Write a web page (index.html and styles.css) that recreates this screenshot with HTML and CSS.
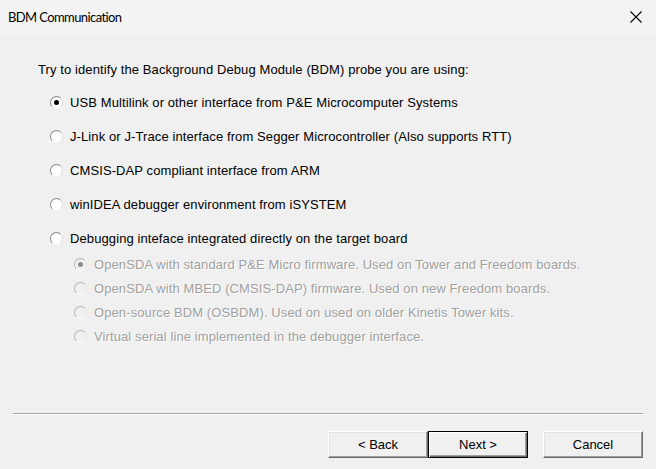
FILE: index.html
```html
<!DOCTYPE html>
<html>
<head>
<meta charset="utf-8">
<link rel="stylesheet" href="styles.css">
</head>
<body>
<div class="dialog">
  <div class="titlebar">
    <span class="title">BDM Communication</span>
    <svg class="close" width="12" height="12" viewBox="0 0 12 12"><path d="M0.5 0.5 L11.5 11.5 M11.5 0.5 L0.5 11.5" stroke="#000" stroke-width="1.1" fill="none"/></svg>
  </div>
  <div class="content">
    <p class="intro">Try to identify the Background Debug Module (BDM) probe you are using:</p>
    <div class="options">
      <div class="opt"><span class="radio on"></span><span>USB Multilink or other interface from P&amp;E Microcomputer Systems</span></div>
      <div class="opt"><span class="radio"></span><span>J-Link or J-Trace interface from Segger Microcontroller (Also supports RTT)</span></div>
      <div class="opt"><span class="radio"></span><span>CMSIS-DAP compliant interface from ARM</span></div>
      <div class="opt"><span class="radio"></span><span>winIDEA debugger environment from iSYSTEM</span></div>
      <div class="opt"><span class="radio"></span><span>Debugging inteface integrated directly on the target board</span></div>
    </div>
    <div class="subopts">
      <div class="sub"><span class="radio dis on"></span><span>OpenSDA with standard P&amp;E Micro firmware. Used on Tower and Freedom boards.</span></div>
      <div class="sub"><span class="radio dis"></span><span>OpenSDA with MBED (CMSIS-DAP) firmware. Used on new Freedom boards.</span></div>
      <div class="sub"><span class="radio dis"></span><span>Open-source BDM (OSBDM). Used on used on older Kinetis Tower kits.</span></div>
      <div class="sub"><span class="radio dis"></span><span>Virtual serial line implemented in the debugger interface.</span></div>
    </div>
  </div>
  <div class="footer">
    <div class="sep"></div>
    <div class="buttons">
      <button class="btn">&lt; Back</button>
      <button class="btn default">Next &gt;</button>
      <button class="btn cancel">Cancel</button>
    </div>
  </div>
</div>
</body>
</html>
```
FILE: styles.css
```css
html, body {
  margin: 0;
  padding: 0;
}
body {
  background: #f0f0f0;
  font-family: "Liberation Sans", Arial, sans-serif;
  font-size: 13px;
  letter-spacing: 0.1px;
  color: #000;
}
.dialog {
  width: 656px;
  height: 469px;
  display: flex;
  flex-direction: column;
  background: #f0f0f0;
  overflow: hidden;
}
.titlebar {
  height: 34px;
  flex: none;
  background: #f3f3f3;
  display: flex;
  align-items: center;
  justify-content: space-between;
  padding: 0 14px 0 8px;
}
.title {
  font-family: Lato, "Open Sans", sans-serif;
  font-size: 13px;
  letter-spacing: -0.6px;
  color: #000;
}
.content {
  flex: 1;
  padding: 28px 0 0 38px;
  box-sizing: border-box;
}
.intro {
  margin: 0;
  line-height: 16px;
  height: 16px;
}
.options {
  display: flex;
  flex-direction: column;
  gap: 10px;
  margin-top: 12px;
  padding-left: 12px;
}
.opt, .sub {
  display: flex;
  align-items: center;
  height: 24px;
  gap: 7px;
  white-space: nowrap;
}
.subopts {
  margin-top: 2px;
  padding-left: 36px;
}
.sub {
  color: #a0a0a0;
  text-shadow: 1px 1px 0 #ffffff;
}
.radio {
  width: 13px;
  height: 13px;
  box-sizing: border-box;
  border-radius: 50%;
  background: #fff;
  border: 1px solid;
  border-color: #8a8a8a #dcdcdc #f4f4f4 #8a8a8a;
  position: relative;
  flex: none;
}
.radio.on::after {
  content: "";
  position: absolute;
  left: 3px;
  top: 3px;
  width: 5px;
  height: 5px;
  border-radius: 50%;
  background: #000;
}
.radio.dis {
  background: #f0f0f0;
  border-color: #b4b4b4 #e8e8e8 #ffffff #b4b4b4;
}
.radio.dis.on::after {
  background: #8c8c8c;
}
.footer {
  flex: none;
  display: flex;
  flex-direction: column;
}
.sep {
  margin: 0 13px;
  border-top: 1px solid #a0a0a0;
  border-bottom: 1px solid #ffffff;
}
.buttons {
  display: flex;
  justify-content: flex-end;
  padding: 16px 13px 11px 0;
}
.btn {
  width: 100px;
  height: 27px;
  box-sizing: border-box;
  font-family: "Liberation Sans", Arial, sans-serif;
  font-size: 13px;
  color: #000;
  background: #f0f0f0;
  border: 1px solid;
  border-color: #ffffff #696969 #696969 #ffffff;
  box-shadow: inset -1px -1px 0 #a0a0a0, inset 1px 1px 0 #e3e3e3;
  padding: 0;
}
.btn.default {
  border: 1px solid #000;
  box-shadow: inset 1px 1px 0 #ffffff, inset -1px -1px 0 #696969, inset -2px -2px 0 #a0a0a0;
}
.btn.cancel {
  margin-left: 15px;
}
```
